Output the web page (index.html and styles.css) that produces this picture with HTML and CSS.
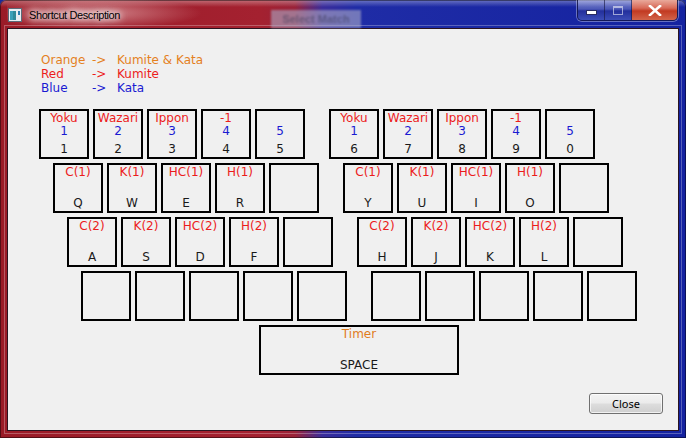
FILE: index.html
```html
<!DOCTYPE html>
<html>
<head>
<meta charset="utf-8">
<title>Shortcut Description</title>
<link rel="stylesheet" href="styles.css">
</head>
<body>
<div class="window">
  <div class="titlebar">
    <svg class="app-icon" width="14" height="14" viewBox="0 0 14 14">
      <rect x="0.5" y="0.5" width="13" height="13" fill="#e8eef2" stroke="#5a6a78"/>
      <rect x="2" y="3" width="6" height="9" fill="#2f8a9a"/>
      <rect x="2" y="3" width="3" height="9" fill="#3aa0b8"/>
      <rect x="10" y="3" width="2" height="4" fill="#2a7fb0"/>
    </svg>
    <span class="title">Shortcut Description</span>
    <div class="ghost">Select Match</div>
    <div class="controls">
      <div class="ctl ctl-min"><span class="min-glyph"></span></div>
      <div class="ctl ctl-max"><span class="max-glyph"></span></div>
      <div class="ctl ctl-close">
        <svg width="14" height="11" viewBox="0 0 14 11"><path d="M2 1 L12 10 M12 1 L2 10" stroke="#ffffff" stroke-width="2.6" stroke-linecap="square"/></svg>
      </div>
    </div>
  </div>
  <div class="client">
    <div class="legend">
      <span class="c-orange">Orange</span><span class="c-orange">-&gt;</span><span class="c-orange">Kumite &amp; Kata</span>
      <span class="c-red">Red</span><span class="c-red">-&gt;</span><span class="c-red">Kumite</span>
      <span class="c-blue">Blue</span><span class="c-blue">-&gt;</span><span class="c-blue">Kata</span>
    </div>
    <div class="keyboard">
      <div class="row row1">
        <div class="group">
          <div class="key"><span class="red">Yoku</span><span class="blue">1</span><span class="label">1</span></div>
          <div class="key"><span class="red">Wazari</span><span class="blue">2</span><span class="label">2</span></div>
          <div class="key"><span class="red">Ippon</span><span class="blue">3</span><span class="label">3</span></div>
          <div class="key"><span class="red">-1</span><span class="blue">4</span><span class="label">4</span></div>
          <div class="key"><span class="red"></span><span class="blue">5</span><span class="label">5</span></div>
        </div>
        <div class="group group-right">
          <div class="key"><span class="red">Yoku</span><span class="blue">1</span><span class="label">6</span></div>
          <div class="key"><span class="red">Wazari</span><span class="blue">2</span><span class="label">7</span></div>
          <div class="key"><span class="red">Ippon</span><span class="blue">3</span><span class="label">8</span></div>
          <div class="key"><span class="red">-1</span><span class="blue">4</span><span class="label">9</span></div>
          <div class="key"><span class="red"></span><span class="blue">5</span><span class="label">0</span></div>
        </div>
      </div>
      <div class="row row2">
        <div class="group">
          <div class="key"><span class="red">C(1)</span><span class="label">Q</span></div>
          <div class="key"><span class="red">K(1)</span><span class="label">W</span></div>
          <div class="key"><span class="red">HC(1)</span><span class="label">E</span></div>
          <div class="key"><span class="red">H(1)</span><span class="label">R</span></div>
          <div class="key"></div>
        </div>
        <div class="group group-right">
          <div class="key"><span class="red">C(1)</span><span class="label">Y</span></div>
          <div class="key"><span class="red">K(1)</span><span class="label">U</span></div>
          <div class="key"><span class="red">HC(1)</span><span class="label">I</span></div>
          <div class="key"><span class="red">H(1)</span><span class="label">O</span></div>
          <div class="key"></div>
        </div>
      </div>
      <div class="row row3">
        <div class="group">
          <div class="key"><span class="red">C(2)</span><span class="label">A</span></div>
          <div class="key"><span class="red">K(2)</span><span class="label">S</span></div>
          <div class="key"><span class="red">HC(2)</span><span class="label">D</span></div>
          <div class="key"><span class="red">H(2)</span><span class="label">F</span></div>
          <div class="key"></div>
        </div>
        <div class="group group-right">
          <div class="key"><span class="red">C(2)</span><span class="label">H</span></div>
          <div class="key"><span class="red">K(2)</span><span class="label">J</span></div>
          <div class="key"><span class="red">HC(2)</span><span class="label">K</span></div>
          <div class="key"><span class="red">H(2)</span><span class="label">L</span></div>
          <div class="key"></div>
        </div>
      </div>
      <div class="row row4">
        <div class="group">
          <div class="key"></div><div class="key"></div><div class="key"></div><div class="key"></div><div class="key"></div>
        </div>
        <div class="group group-right">
          <div class="key"></div><div class="key"></div><div class="key"></div><div class="key"></div><div class="key"></div>
        </div>
      </div>
      <div class="row row5">
        <div class="key key-space"><span class="orange">Timer</span><span class="label">SPACE</span></div>
      </div>
    </div>
    <div class="footer">
      <button class="btn">Close</button>
    </div>
  </div>
</div>
</body>
</html>
```
FILE: styles.css
```css
html, body {
  margin: 0;
  padding: 0;
  background: #1a2a9a;
}

.window {
  position: relative;
  width: 686px;
  height: 438px;
  box-sizing: border-box;
  padding: 0 7px 7px 7px;
  overflow: hidden;
  border-radius: 6px 6px 0 0;
  background:
    linear-gradient(180deg, rgba(255,255,255,0.35) 0px, rgba(255,255,255,0) 7px),
    linear-gradient(90deg, #9a1b27 0%, #a42130 38%, #9a2238 43%, #3a2c9a 47%, #1f2ca6 52%, #1422a0 100%);
  box-shadow: inset 0 0 0 1px rgba(0,0,0,0.45);
}

.titlebar {
  position: relative;
  height: 28px;
  display: flex;
  align-items: center;
  padding-left: 1px;
  background: radial-gradient(ellipse 110px 16px at 85px 13px, rgba(255,225,225,0.55), rgba(255,225,225,0) 100%);
}

.app-icon {
  display: block;
  margin-top: 2px;
  flex: none;
}

.title {
  margin-left: 7px;
  margin-top: 1px;
  font-family: "Liberation Sans", Arial, sans-serif;
  font-size: 11px;
  letter-spacing: -0.4px;
  color: #000;
  text-shadow: 0 0 6px #fff, 0 0 8px #fff, 0 0 10px rgba(255,255,255,0.8);
}

.ghost {
  position: absolute;
  left: 264px;
  top: 10px;
  width: 90px;
  height: 18px;
  line-height: 18px;
  text-align: center;
  font-family: "Liberation Sans", sans-serif;
  font-size: 11px;
  font-weight: bold;
  color: rgba(60,60,90,0.55);
  background: rgba(170,170,200,0.6);
  filter: blur(1.3px);
}

.controls {
  position: absolute;
  right: 1px;
  top: 0;
  display: flex;
  height: 20px;
  border: 1px solid rgba(20,20,60,0.75);
  border-top: none;
  border-radius: 0 0 5px 5px;
  overflow: hidden;
  box-shadow: 0 0 0 1px rgba(255,255,255,0.35);
}

.ctl {
  display: flex;
  align-items: center;
  justify-content: center;
  height: 20px;
}

.ctl-min, .ctl-max {
  width: 26px;
  background: linear-gradient(180deg, rgba(210,215,245,0.55) 0%, rgba(140,150,210,0.45) 45%, rgba(50,60,150,0.45) 55%, rgba(90,110,200,0.55) 100%);
  border-right: 1px solid rgba(20,20,60,0.6);
}

.min-glyph {
  display: block;
  width: 9px;
  height: 3px;
  margin-top: 5px;
  background: #fff;
  box-shadow: 0 0 0 1px rgba(40,40,80,0.8);
}

.max-glyph {
  display: block;
  width: 8px;
  height: 6px;
  border: 1px solid rgba(255,255,255,0.55);
  border-top-width: 2px;
}

.ctl-close {
  width: 45px;
  background: linear-gradient(180deg, #e9a99b 0%, #d86a58 40%, #c23a22 55%, #d2644a 100%);
}

.client {
  height: 403px;
  box-sizing: border-box;
  border: 1px solid #2b1420;
  background: #f0f0f0;
  outline: 1px solid rgba(255,255,255,0.28);
  outline-offset: 2px;
  font-family: "DejaVu Sans", Verdana, sans-serif;
  font-size: 12px;
}

.legend {
  display: grid;
  grid-template-columns: 51px 25px auto;
  padding: 24px 0 0 33px;
  line-height: 14px;
  white-space: nowrap;
}

.c-orange { color: #e4801e; }
.c-red { color: #ec1c1c; }
.c-blue { color: #1a1ad2; }

.keyboard {
  margin-top: 14px;
  display: flex;
  flex-direction: column;
  gap: 4px;
}

.row {
  display: flex;
}

.row1 { padding-left: 31px; }
.row2 { padding-left: 45px; }
.row3 { padding-left: 59px; }
.row4 { padding-left: 73px; }
.row5 { padding-left: 251px; }

.group {
  display: flex;
  gap: 4px;
}

.group-right {
  margin-left: 24px;
}

.key {
  width: 50px;
  height: 50px;
  box-sizing: border-box;
  border: 2px solid #000;
  display: flex;
  flex-direction: column;
  align-items: center;
  line-height: 13px;
  white-space: nowrap;
  padding-top: 1px;
  padding-bottom: 1px;
}

.key .red { color: #ec1c1c; min-height: 13px; }
.key .blue { color: #1a1ad2; }
.key .orange { color: #e07c1c; }
.key .label { margin-top: auto; color: #1a1a1a; }

.key-space {
  width: 200px;
}

.footer {
  display: flex;
  justify-content: flex-end;
  padding-right: 15px;
  margin-top: 18px;
}

.btn {
  width: 74px;
  height: 21px;
  padding: 0;
  border: 1px solid #707070;
  border-radius: 3px;
  background: linear-gradient(180deg, #f3f3f3 0%, #ebebeb 48%, #dddddd 52%, #cfcfcf 100%);
  box-shadow: inset 0 0 0 1px rgba(255,255,255,0.7);
  font-family: "Noto Sans", "Open Sans", sans-serif;
  font-size: 11px;
  color: #000;
}
```
